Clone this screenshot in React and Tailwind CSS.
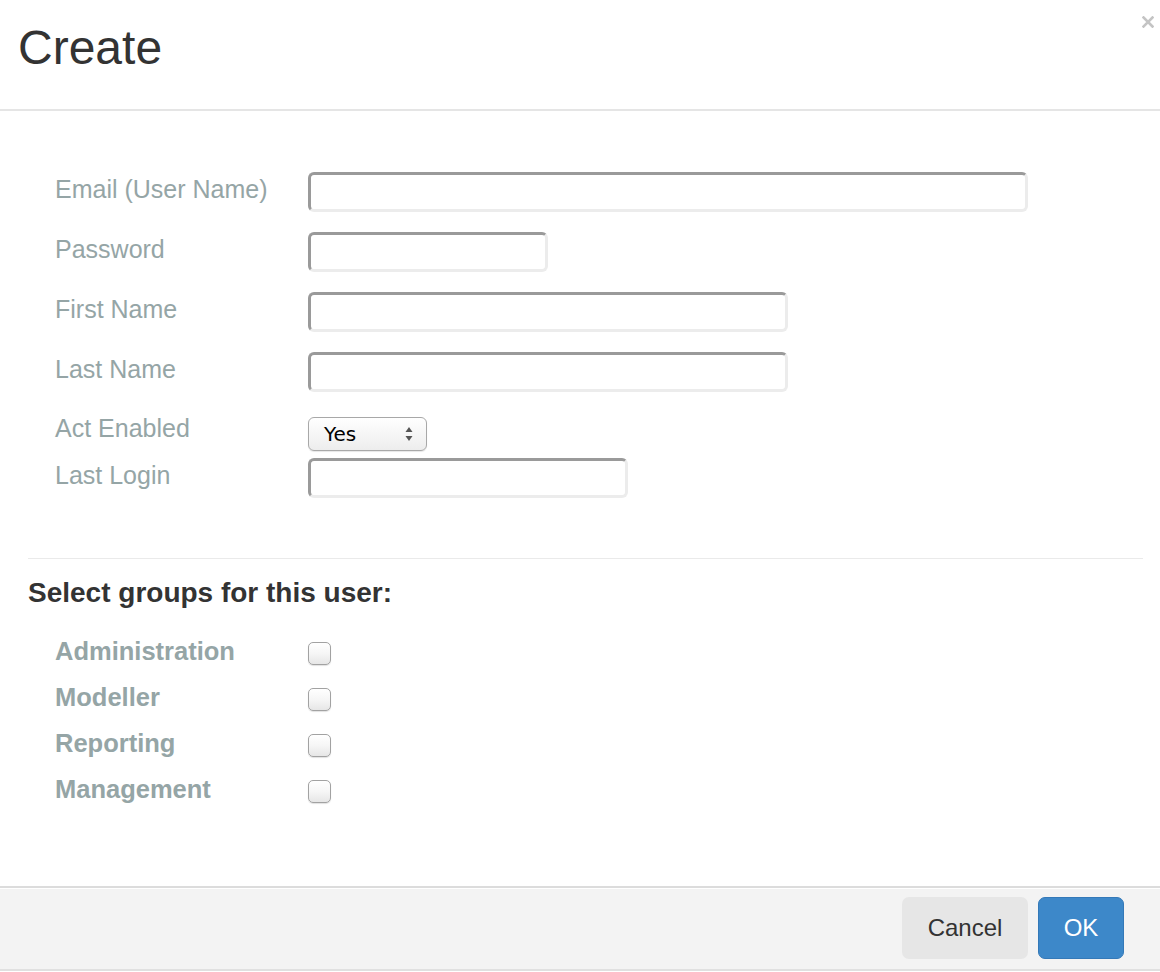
import React from 'react';

const fields = [
  { label: 'Email (User Name)', width: 'w-[720px]' },
  { label: 'Password', width: 'w-[240px]' },
  { label: 'First Name', width: 'w-[480px]' },
  { label: 'Last Name', width: 'w-[480px]' },
];

const groups = ['Administration', 'Modeller', 'Reporting', 'Management'];

function TextBox({ width }) {
  return (
    <div
      className={`${width} h-[40px] rounded-[6px] border-[3px] border-t-[#9a9a9a] border-l-[#9a9a9a] border-r-[#ececec] border-b-[#ececec] bg-white`}
    />
  );
}

function Checkbox() {
  return (
    <div className="w-[23px] h-[23px] rounded-[5px] border border-[#a2a2a2] bg-gradient-to-b from-white via-[#f6f6f6] to-[#e6e6e6] shadow-[0_1px_1px_rgba(0,0,0,0.12)]" />
  );
}

export default function App() {
  return (
    <div className="relative w-[1160px] h-[972px] bg-white font-['Liberation_Sans',Arial,sans-serif] text-[#333]">
      {/* Header */}
      <div className="h-[111px] border-b-2 border-[#e5e5e5] px-[18px] pt-[24px]">
        <h1 className="text-[48px] leading-none text-[#333]">Create</h1>
      </div>
      <button className="absolute right-[6px] top-[16px] w-[12px] h-[12px]" aria-label="Close">
        <svg viewBox="0 0 12 12" className="w-[12px] h-[12px]">
          <path d="M1.5 1.5 L10.5 10.5 M10.5 1.5 L1.5 10.5" stroke="#c4c4c4" strokeWidth="2.6" strokeLinecap="square" />
        </svg>
      </button>

      {/* Body */}
      <div className="pl-[28px] pr-[17px]">
        <div className="pl-[27px] pt-[61px]">
          <div className="flex flex-col gap-[20px]">
            {fields.map((f) => (
              <div key={f.label} className="flex items-start">
                <label className="w-[253px] pt-[2px] text-[25px] leading-[30px] text-[#95a5a6]">{f.label}</label>
                <TextBox width={f.width} />
              </div>
            ))}
          </div>

          <div className="flex items-start mt-[21px]">
            <label className="w-[253px] text-[25px] leading-[30px] text-[#95a5a6]">Act Enabled</label>
            <div className="mt-[4px] w-[119px] h-[34px] rounded-[6px] border border-[#a8a8a8] bg-gradient-to-b from-white to-[#ededed] shadow-[0_1px_1px_rgba(0,0,0,0.1)] flex items-center justify-between pl-[15px] pr-[13px]">
              <span className="font-['DejaVu_Sans',sans-serif] text-[20px] leading-none text-black">Yes</span>
              <svg viewBox="0 0 8 14" className="w-[8px] h-[14px]">
                <path d="M4 0 L7.5 5 L0.5 5 Z" fill="#555" />
                <path d="M0.5 9 L7.5 9 L4 14 Z" fill="#555" />
              </svg>
            </div>
          </div>

          <div className="flex items-start mt-[7px]">
            <label className="w-[253px] pt-[2px] text-[25px] leading-[30px] text-[#95a5a6]">Last Login</label>
            <TextBox width="w-[320px]" />
          </div>
        </div>

        <hr className="mt-[60px] border-0 border-t border-[#eaeaea]" />

        <h3 className="mt-[18px] text-[28px] leading-[32px] font-bold text-[#333]">Select groups for this user:</h3>

        <div className="pl-[27px] mt-[27px]">
          {groups.map((g) => (
            <div key={g} className="flex items-start h-[46px]">
              <span className="w-[253px] text-[25.5px] leading-[30px] font-bold text-[#95a5a6]">{g}</span>
              <div className="mt-[6px]">
                <Checkbox />
              </div>
            </div>
          ))}
        </div>
      </div>

      {/* Footer */}
      <div className="absolute left-0 right-0 top-[886px] border-t-2 border-b-2 border-t-[#dcdcdc] border-b-[#e0e0e0]">
        <div className="h-[81px] border-t border-white bg-[#f3f3f3] flex justify-end items-start gap-[10px] pt-[8px] pr-[36px]">
          <button className="w-[126px] h-[62px] rounded-[7px] bg-[#e6e6e6] text-[24px] text-[#333]">Cancel</button>
          <button className="w-[86px] h-[62px] rounded-[7px] bg-[#3d88c9] border border-[#3479b8] text-[24px] text-white">OK</button>
        </div>
      </div>
    </div>
  );
}
